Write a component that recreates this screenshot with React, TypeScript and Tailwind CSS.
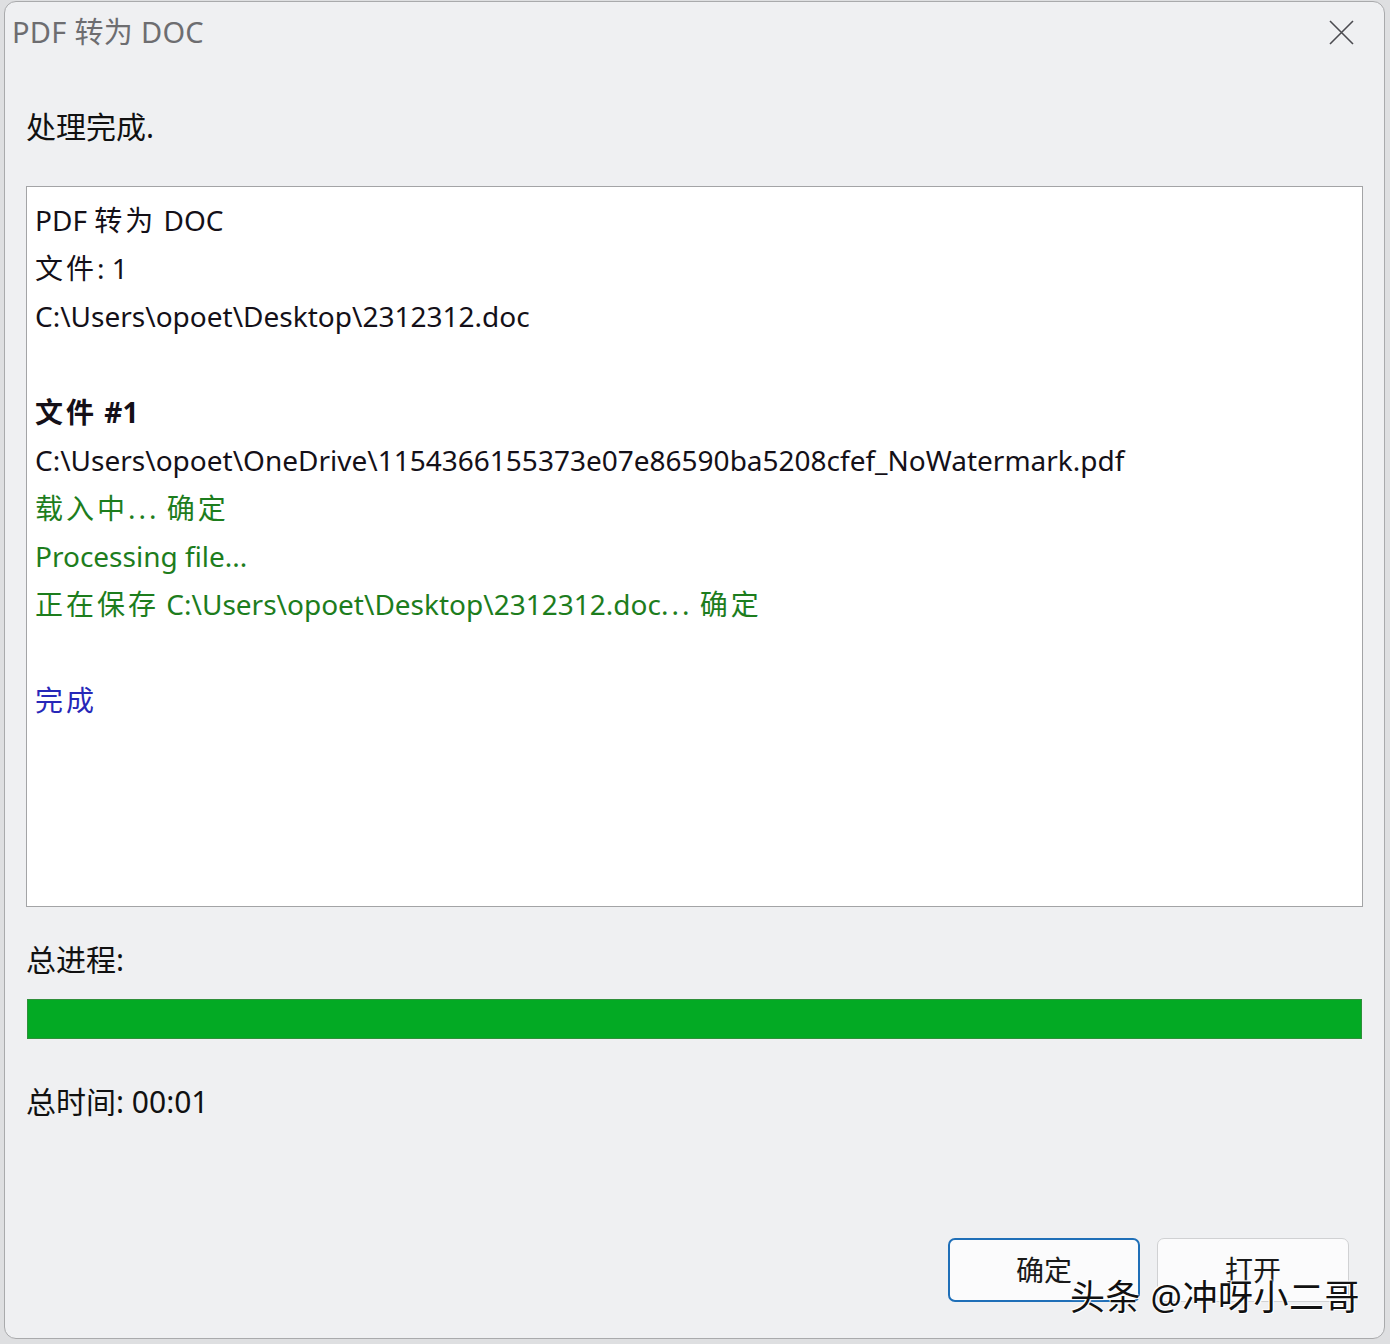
const font = { fontFamily: '"Noto Sans", "Noto Sans CJK SC", sans-serif' };

function LogLine({ children, className = "" }: { children: React.ReactNode; className?: string }) {
  return <div className={"h-[48px] leading-[48px] whitespace-nowrap " + className}>{children}</div>;
}

// CJK runs in the log are spaced a little wider than the latin text
function Wide({ children }: { children: React.ReactNode }) {
  return <span className="tracking-[3px]">{children}</span>;
}

function CloseIcon() {
  return (
    <svg width="25" height="25" viewBox="0 0 25 25" className="mr-[23px] mt-[1px]">
      <path d="M1 1 L24 24 M24 1 L1 24" stroke="#4b4b50" strokeWidth="1.6" fill="none" />
    </svg>
  );
}

export default function App() {
  return (
    <div
      className="w-[1390px] h-[1344px] bg-[#dedfe1] pl-[4px] pr-[5px] pt-[1px] pb-[5px]"
      style={font}
    >
      <div className="relative h-full flex flex-col rounded-[12px] border border-[#a9aaac] bg-[#eff0f2] px-[21px] pb-[36px]">
        {/* title bar */}
        <div className="h-[60px] -mx-[14px] flex items-center justify-between">
          <span className="text-[29px] text-[#6d6d70] tracking-[0.3px]">PDF 转为 DOC</span>
          <CloseIcon />
        </div>

        <div className="mt-[45px] h-[40px] leading-[40px] text-[30px] text-[#111]">处理完成.</div>

        {/* log box */}
        <div className="mt-[39px] h-[721px] border border-[#a3a4a6] bg-white pt-[9px] pl-[8px] text-[28px] text-[#141018]">
          <LogLine>PDF <Wide>转为</Wide> DOC</LogLine>
          <LogLine><Wide>文件</Wide>: 1</LogLine>
          <LogLine>C:\Users\opoet\Desktop\2312312.doc</LogLine>
          <LogLine> </LogLine>
          <LogLine className="font-bold"><Wide>文件</Wide> #1</LogLine>
          <LogLine>C:\Users\opoet\OneDrive\1154366155373e07e86590ba5208cfef_NoWatermark.pdf</LogLine>
          <LogLine className="text-[#1d7d1d]"><Wide>载入中...</Wide> <Wide>确定</Wide></LogLine>
          <LogLine className="text-[#1d7d1d]">Processing file...</LogLine>
          <LogLine className="text-[#1d7d1d]">
            <Wide>正在保存</Wide> C:\Users\opoet\Desktop\2312312.doc<Wide>...</Wide> <Wide>确定</Wide>
          </LogLine>
          <LogLine> </LogLine>
          <LogLine className="text-[#2727b8]"><Wide>完成</Wide></LogLine>
        </div>

        <div className="mt-[33px] h-[40px] leading-[40px] text-[30px] text-[#111]">总进程:</div>

        <div className="mt-[19px] h-[40px] mx-[1px] border border-[#2f8f3a] bg-[#03aa24]" />

        <div className="mt-[43px] h-[40px] leading-[40px] text-[30px] text-[#111]">总时间: 00:01</div>

        <div className="mt-auto flex justify-end gap-[17px] pr-[14px]">
          <button className="w-[192px] h-[64px] rounded-[7px] border-2 border-[#1f6fb8] bg-[#fbfbfc] text-[28px] text-[#1a1a1a] leading-none">
            确定
          </button>
          <button className="w-[192px] h-[64px] rounded-[7px] border border-[#d0d1d3] bg-[#fbfbfc] text-[28px] text-[#1a1a1a] leading-none">
            打开
          </button>
        </div>

        {/* watermark */}
        <div className="absolute right-[24px] bottom-[24px] text-[35px] leading-none text-[#111] tracking-[0.5px] [text-shadow:0_0_2px_#fff,0_0_2px_#fff,1px_1px_0_#fff,-1px_-1px_0_#fff]">
          头条 @冲呀小二哥
        </div>
      </div>
    </div>
  );
}
